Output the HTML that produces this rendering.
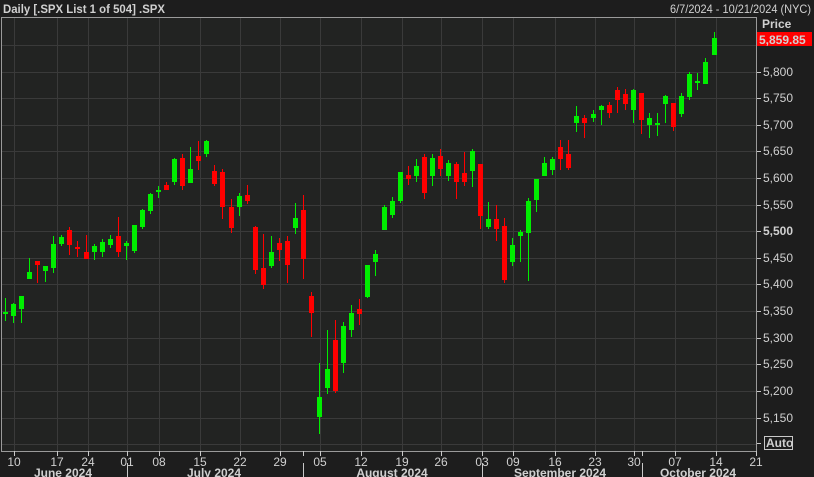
<!DOCTYPE html>
<html><head><meta charset="utf-8"><style>
html,body{margin:0;padding:0;background:#1d1d1d;width:814px;height:477px;overflow:hidden}
svg{display:block}
text{font-family:"Liberation Sans Narrow","Liberation Sans",sans-serif;fill:#d0d0d0;font-size:12px}
</style></head><body>
<svg width="814" height="477" viewBox="0 0 814 477" xmlns="http://www.w3.org/2000/svg">
<rect x="0" y="0" width="814" height="477" fill="#1d1d1d"/>
<text x="3" y="13" style="font-weight:bold" fill="#d8d8d8" textLength="162" lengthAdjust="spacingAndGlyphs">Daily [.SPX List 1 of 504] .SPX</text>
<text x="670" y="13" fill="#c8c8c8" textLength="141" lengthAdjust="spacingAndGlyphs">6/7/2024 - 10/21/2024 (NYC)</text>
<rect x="1.5" y="17.5" width="755" height="434" fill="#222322" stroke="#9a9a9a" stroke-width="1"/>
<g stroke="#3a3a3a" stroke-width="1">
<path d="M2 45.5H756M2 72.5H756M2 98.5H756M2 125.5H756M2 151.5H756M2 178.5H756M2 205.5H756M2 231.5H756M2 258.5H756M2 284.5H756M2 311.5H756M2 338.5H756M2 364.5H756M2 391.5H756M2 418.5H756M2 444.5H756"/>
<path d="M14.5 18V451M57.5 18V451M88.5 18V451M127.5 18V451M159.5 18V451M200.5 18V451M240.5 18V451M280.5 18V451M320.5 18V451M361.5 18V451M402.5 18V451M441.5 18V451M482.5 18V451M513.5 18V451M555.5 18V451M595.5 18V451M634.5 18V451M675.5 18V451M716.5 18V451"/>
</g>
<g fill="#00ee00" stroke="#00ee00">
<path stroke-width="1" fill="none" d="M5.5 298V321M13.5 303V323M21.5 296V323M29.5 258V279M45.5 266V282M53.5 236V273M61.5 235V246M94.5 244V260M102.5 239V257M110.5 235V248M126.5 241V260M134.5 225V253M142.5 209V229M150.5 193V214M158.5 186V198M174.5 158V185M190.5 147V183M206.5 140V157M239.5 193V216M271.5 236V268M295.5 203V234M319.5 363V434M327.5 330V394M343.5 322V373M351.5 305V337M367.5 265V298M375.5 250V276M384.5 205V230M392.5 197V218M400.5 172V203M416.5 159V182M432.5 154V186M448.5 160V181M472.5 149V187M488.5 202V229M512.5 238V266M520.5 230V262M528.5 198V281M536.5 179V212M544.5 157V176M552.5 157V175M576.5 106V132M593.5 110V122M601.5 105V125M633.5 89V123M649.5 113V138M657.5 113V136M665.5 95V123M681.5 93V117M689.5 72V100M697.5 73V90M705.5 58V84M714.5 32V55"/>
<path stroke="none" d="M3 312h5v2h-5zM11 304h5v12h-5zM19 296h5v13h-5zM27 272h5v7h-5zM43 266h5v5h-5zM51 244h5v24h-5zM59 237h5v7h-5zM92 246h5v6h-5zM100 242h5v10h-5zM108 239h5v6h-5zM124 243h5v3h-5zM132 225h5v26h-5zM140 210h5v17h-5zM148 194h5v17h-5zM156 190h5v2h-5zM172 159h5v23h-5zM188 169h5v14h-5zM204 141h5v13h-5zM237 196h5v11h-5zM269 252h5v14h-5zM293 218h5v10h-5zM317 397h5v20h-5zM325 369h5v19h-5zM341 326h5v37h-5zM349 313h5v17h-5zM365 265h5v32h-5zM373 254h5v8h-5zM382 207h5v23h-5zM390 201h5v14h-5zM398 172h5v29h-5zM414 166h5v10h-5zM430 158h5v18h-5zM446 163h5v13h-5zM470 151h5v20h-5zM486 219h5v8h-5zM510 245h5v17h-5zM518 232h5v4h-5zM526 201h5v32h-5zM534 179h5v21h-5zM542 163h5v13h-5zM550 159h5v11h-5zM574 116h5v7h-5zM591 114h5v4h-5zM599 106h5v4h-5zM631 90h5v20h-5zM647 118h5v7h-5zM655 123h5v2h-5zM663 96h5v8h-5zM679 96h5v18h-5zM687 74h5v23h-5zM695 81h5v2h-5zM703 62h5v22h-5zM712 38h5v17h-5z"/>
</g>
<g fill="#ff0000" stroke="#ff0000">
<path stroke-width="1" fill="none" d="M37.5 261V283M69.5 227V255M77.5 241V257M86.5 235V259M118.5 217V257M166.5 182V190M182.5 154V190M198.5 141V170M214.5 165V186M222.5 169V219M231.5 199V233M247.5 185V204M255.5 226V274M263.5 234V289M279.5 238V261M287.5 236V283M303.5 195V279M311.5 292V337M335.5 320V393M359.5 299V325M408.5 166V185M424.5 154V199M440.5 149V176M456.5 162V199M464.5 152V186M480.5 164V229M496.5 205V241M504.5 218V283M560.5 140V170M568.5 140V170M584.5 115V138M609.5 102V118M617.5 87V113M625.5 89V110M641.5 93V134M673.5 103V131"/>
<path stroke="none" d="M35 261h5v4h-5zM67 230h5v15h-5zM75 247h5v2h-5zM84 252h5v7h-5zM116 236h5v16h-5zM164 185h5v5h-5zM180 158h5v28h-5zM196 156h5v5h-5zM212 171h5v13h-5zM220 172h5v35h-5zM229 207h5v21h-5zM245 195h5v6h-5zM253 227h5v43h-5zM261 268h5v17h-5zM277 243h5v7h-5zM285 241h5v24h-5zM301 210h5v49h-5zM309 296h5v17h-5zM333 340h5v51h-5zM357 309h5v5h-5zM406 175h5v4h-5zM422 157h5v36h-5zM438 156h5v13h-5zM454 164h5v18h-5zM462 173h5v9h-5zM478 164h5v52h-5zM494 219h5v10h-5zM502 226h5v54h-5zM558 147h5v12h-5zM566 154h5v14h-5zM582 118h5v5h-5zM607 105h5v8h-5zM615 90h5v10h-5zM623 94h5v10h-5zM639 93h5v27h-5zM671 103h5v24h-5z"/>
</g>
<text x="762" y="28" style="font-weight:bold" fill="#e0e0e0">Price</text>
<rect x="757" y="32" width="55" height="14" fill="#ff0000"/>
<text x="759" y="44" style="font-weight:bold" fill="#1a1a1a" font-size="12">5,859.85</text>
<g fill="#c8c8c8">
<path d="M757 72.5h4M757 98.5h4M757 125.5h4M757 151.5h4M757 178.5h4M757 205.5h4M757 231.5h4M757 258.5h4M757 284.5h4M757 311.5h4M757 338.5h4M757 364.5h4M757 391.5h4M757 418.5h4M757 443.5h4" stroke="#c8c8c8"/>
<text x="763" y="76">5,800</text><text x="763" y="102">5,750</text><text x="763" y="129">5,700</text><text x="763" y="155">5,650</text><text x="763" y="182">5,600</text><text x="763" y="209">5,550</text><text x="763" y="235" style="font-weight:bold" fill="#e8e8e8">5,500</text><text x="763" y="262">5,450</text><text x="763" y="288">5,400</text><text x="763" y="315">5,350</text><text x="763" y="342">5,300</text><text x="763" y="368">5,250</text><text x="763" y="395">5,200</text><text x="763" y="422">5,150</text>
</g>
<rect x="764.5" y="436.5" width="28" height="13" fill="none" stroke="#c8c8c8"/>
<text x="766" y="447" style="font-weight:bold" fill="#e0e0e0">Auto</text>
<g stroke="#c8c8c8"><path d="M14.5 451v5M57.5 451v5M88.5 451v5M127.5 451v5M159.5 451v5M200.5 451v5M240.5 451v5M280.5 451v5M303.5 451v5M320.5 451v5M361.5 451v5M402.5 451v5M441.5 451v5M482.5 451v5M513.5 451v5M555.5 451v5M595.5 451v5M634.5 451v5M642.5 451v5M675.5 451v5M716.5 451v5M756.5 451v5"/>
<path d="M127.5 463v14M303.5 463v14M482.5 463v14M642.5 463v14"/></g>
<g text-anchor="middle" fill="#c8c8c8">
<text x="14" y="466">10</text><text x="57" y="466">17</text><text x="88" y="466">24</text><text x="127" y="466">01</text><text x="159" y="466">08</text><text x="200" y="466">15</text><text x="240" y="466">22</text><text x="280" y="466">29</text><text x="320" y="466">05</text><text x="361" y="466">12</text><text x="402" y="466">19</text><text x="441" y="466">26</text><text x="482" y="466">03</text><text x="513" y="466">09</text><text x="555" y="466">16</text><text x="595" y="466">23</text><text x="634" y="466">30</text><text x="675" y="466">07</text><text x="716" y="466">14</text><text x="756" y="466">21</text>
</g>
<g text-anchor="middle" style="font-weight:bold" fill="#d8d8d8">
<text x="63" y="477">June 2024</text><text x="214" y="477">July 2024</text><text x="392" y="477">August 2024</text><text x="560" y="477">September 2024</text><text x="698" y="477">October 2024</text>
</g>
</svg>
</body></html>
